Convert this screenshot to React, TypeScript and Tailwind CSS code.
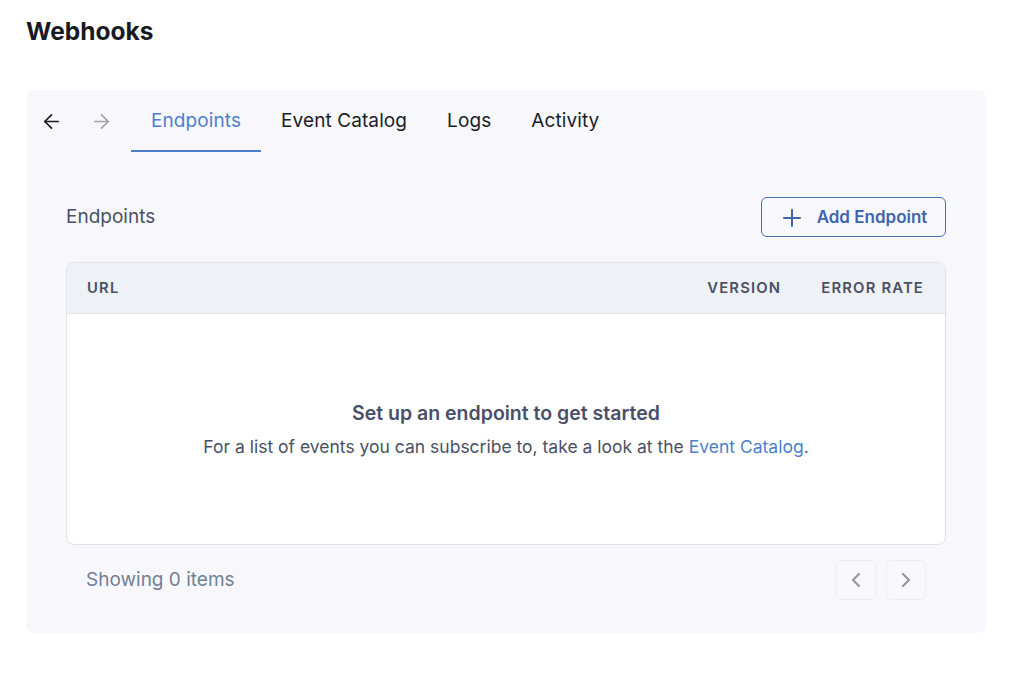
import { ArrowLeft, ArrowRight, ChevronLeft, ChevronRight } from 'lucide-react';

const tabs = ['Endpoints', 'Event Catalog', 'Logs', 'Activity'];

function PlusIcon() {
  return (
    <svg width="18" height="18" viewBox="0 0 18 18" fill="none" stroke="currentColor" strokeWidth="2" strokeLinecap="round">
      <path d="M1 9h16M9 1v16" />
    </svg>
  );
}

export default function App() {
  return (
    <div className="min-h-[682px] bg-white px-[26px] pt-[15px] font-['Inter',sans-serif]">
      <h1 className="text-[24.5px] font-bold leading-[32px] text-[#171a23]">Webhooks</h1>

      <div className="mt-[43px] w-[960px] rounded-[8px] bg-[#f7f7fc]">
        {/* tab bar */}
        <div className="flex h-[62px] items-stretch">
          <button className="flex w-[50px] items-center justify-center text-[#1a1d26]">
            <ArrowLeft className="h-[23px] w-[23px]" strokeWidth={1.8} />
          </button>
          <button className="flex w-[50px] items-center justify-center text-[#a0a3ab]">
            <ArrowRight className="h-[23px] w-[23px]" strokeWidth={1.8} />
          </button>
          <div className="ml-[5px] flex items-stretch">
            {tabs.map((t, i) => (
              <div
                key={t}
                className={`flex items-center px-[20px] pt-[2px] text-[19px] tracking-[0.005em] ${
                  i === 0
                    ? 'border-b-2 border-[#4e7fcf] text-[#4e7fcf]'
                    : 'border-b-2 border-transparent text-[#1a1d26]'
                }`}
              >
                {t}
              </div>
            ))}
          </div>
        </div>

        <div className="px-[40px] pt-[45px] pb-[33px]">
          <div className="flex items-center justify-between">
            <h2 className="pt-[1px] text-[19px] text-[#4a5064]">Endpoints</h2>
            <button className="flex h-[40px] w-[185px] items-center justify-center gap-[16px] rounded-[6px] border border-[#4a6db0] pl-[3px] pt-[1px] text-[17px] font-semibold text-[#3f64ad]">
              <PlusIcon />
              Add Endpoint
            </button>
          </div>

          <div className="mt-[25px] overflow-hidden rounded-[8px] border border-[#e1e3ea] bg-white">
            <div className="flex h-[51px] items-center border-b border-[#e1e3ea] bg-[#eef1f6] pl-[20px] pr-[21px] pt-[1px] text-[14.8px] font-semibold tracking-[0.08em] text-[#4a5064]">
              <div className="flex-1">URL</div>
              <div className="w-[114px]">VERSION</div>
              <div>ERROR RATE</div>
            </div>
            <div className="flex h-[230px] flex-col items-center justify-center">
              <p className="text-[19.5px] font-semibold leading-[28px] text-[#4a4f69]">Set up an endpoint to get started</p>
              <p className="mt-[7px] text-[17.5px] leading-[26px] text-[#4a5064]">
                For a list of events you can subscribe to, take a look at the{' '}
                <span className="text-[#4a7fd0]">Event Catalog</span>.
              </p>
            </div>
          </div>

          <div className="mt-[15px] flex items-center justify-between px-[20px]">
            <span className="pt-[1px] text-[19px] text-[#718096]">Showing 0 items</span>
            <div className="flex gap-[10px]">
              <button className="flex h-[40px] w-[40px] items-center justify-center rounded-[6px] border border-[#ededf3] bg-[#f9f9fd] text-[#9a9aa6]">
                <ChevronLeft className="h-[24px] w-[24px]" strokeWidth={2.4} />
              </button>
              <button className="flex h-[40px] w-[40px] items-center justify-center rounded-[6px] border border-[#ededf3] bg-[#f9f9fd] text-[#9a9aa6]">
                <ChevronRight className="h-[24px] w-[24px]" strokeWidth={2.4} />
              </button>
            </div>
          </div>
        </div>
      </div>
    </div>
  );
}
